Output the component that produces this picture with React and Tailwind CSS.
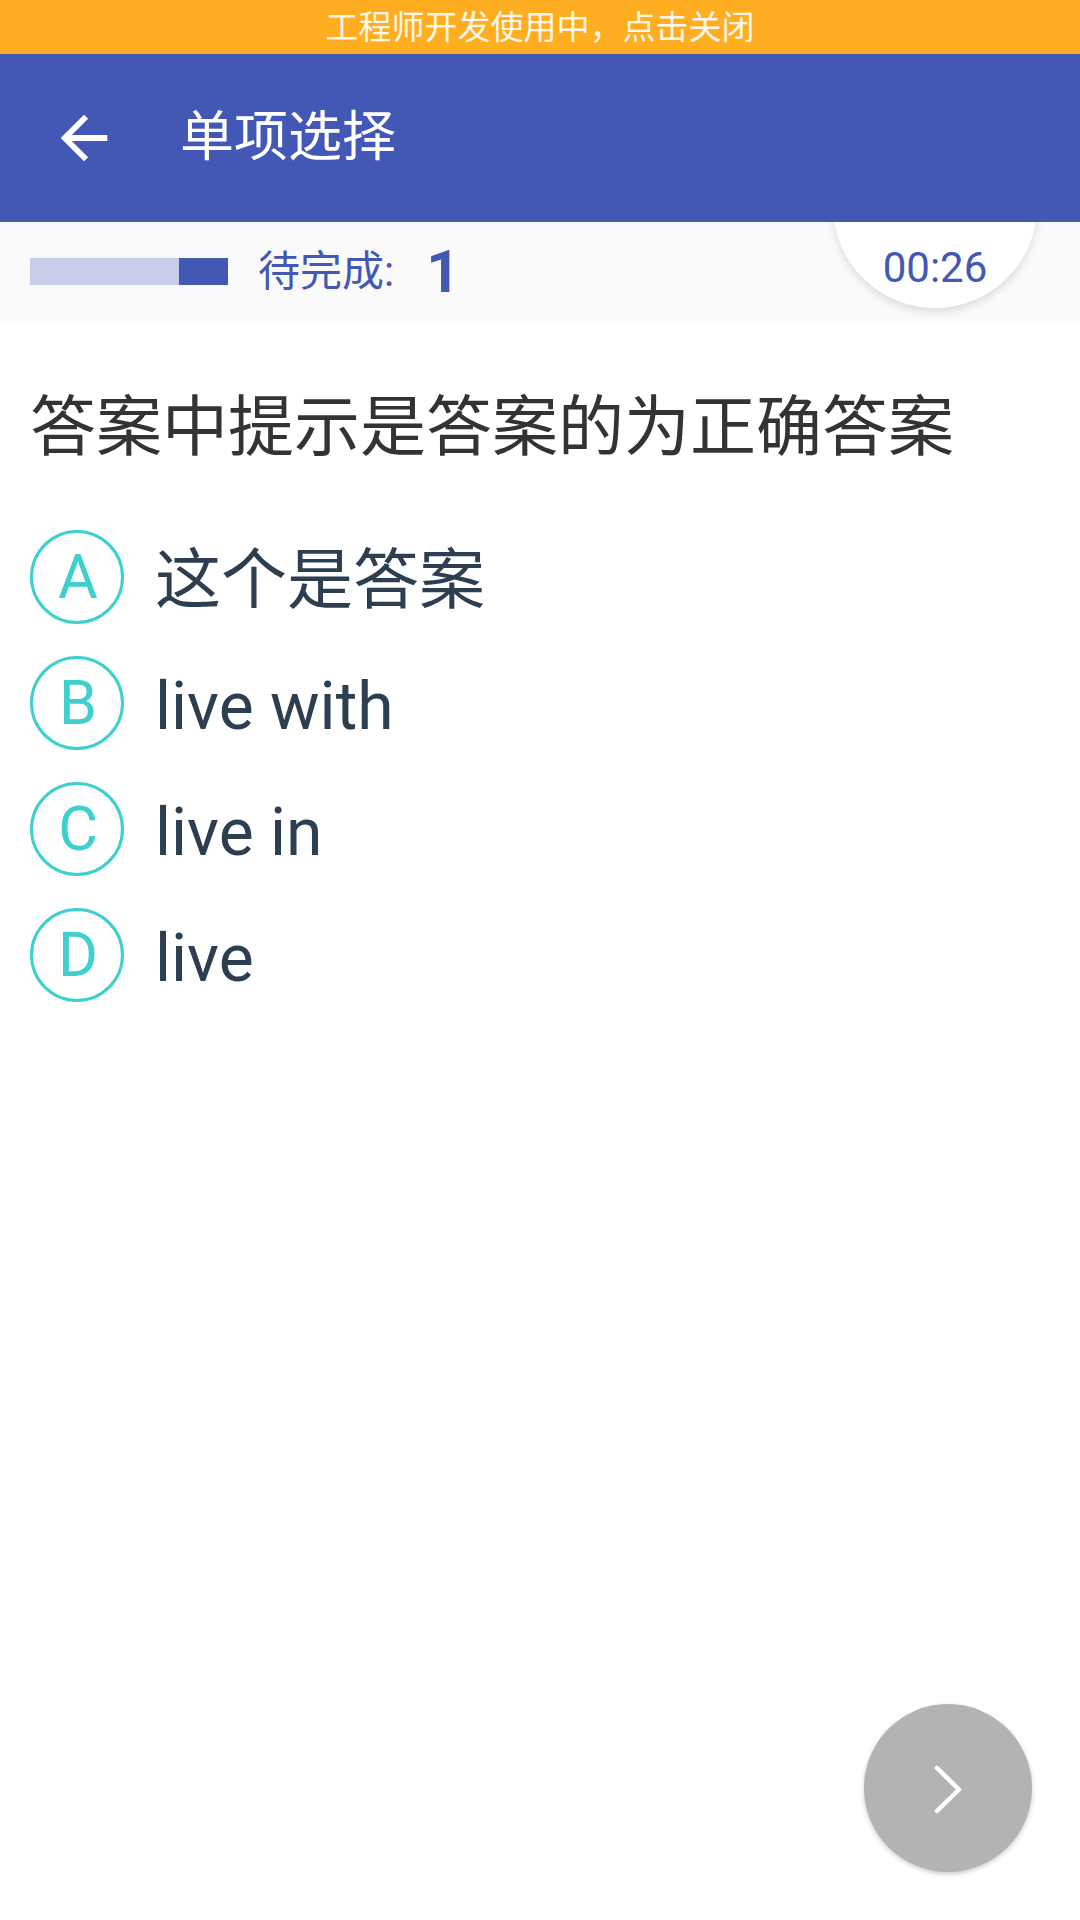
const OPTIONS = [
  { key: "A", label: "这个是答案" },
  { key: "B", label: "live with" },
  { key: "C", label: "live in" },
  { key: "D", label: "live" },
];

const BackArrow = () => (
  <svg viewBox="0 0 24 24" className="h-[70px] w-[70px]" fill="white">
    <path d="M20 11H7.83l5.59-5.59L12 4l-8 8 8 8 1.41-1.41L7.83 13H20v-2z" />
  </svg>
);

const OptionRow = ({ option }) => (
  <div className="flex items-center">
    <div className="flex h-[94px] w-[94px] shrink-0 items-center justify-center rounded-full border-[3px] border-[#3ecfcf] pl-[2px] text-[61px] leading-none text-[#3ecfcf]">
      {option.key}
    </div>
    <span className="ml-[31px] mt-[7px] text-[66px] leading-[80px] text-[#2c3e50]">
      {option.label}
    </span>
  </div>
);

const App = () => {
  return (
    <div className="relative min-h-[1920px] w-[1080px] bg-white font-['Roboto','Noto_Sans_CJK_SC',sans-serif]">
      <div className="flex h-[54px] items-center justify-center bg-[#ffad21] text-[33px] leading-none text-white/90">
        工程师开发使用中，点击关闭
      </div>

      <header className="relative z-10 flex h-[168px] items-center bg-[#4258b4] pl-[49px]">
        <BackArrow />
        <h1 className="ml-[61px] text-[54px] leading-none text-white">单项选择</h1>
      </header>

      <div className="relative flex h-[99px] items-center bg-[#fafafa] pl-[30px]">
        <div className="flex h-[27px] w-[198px]">
          <div className="w-[149px] bg-[#c8cdea]" />
          <div className="flex-1 bg-[#4258b4]" />
        </div>
        <span className="ml-[30px] text-[42px] leading-none text-[#4258b4]">待完成:</span>
        <span className="ml-[32px] text-[59px] font-bold leading-none text-[#4258b4]">1</span>

        <div className="absolute left-[833px] top-[-118px] flex h-[204px] w-[204px] flex-col items-center justify-end rounded-full bg-white pb-[19px] shadow-[0_4px_8px_rgba(0,0,0,0.12)]">
          <span className="text-[42px] leading-none text-[#4258b4]">00:26</span>
        </div>
      </div>

      <main className="px-[30px] pt-[67px]">
        <p className="text-[66px] leading-[80px] text-[#333333]">答案中提示是答案的为正确答案</p>
        <div className="mt-[62px] flex flex-col gap-[32px]">
          {OPTIONS.map((option) => (
            <OptionRow key={option.key} option={option} />
          ))}
        </div>
      </main>

      <button className="absolute bottom-[48px] right-[48px] h-[168px] w-[168px] rounded-full bg-[#b3b3b3] shadow-[0_2px_5px_rgba(0,0,0,0.2)]">
        <svg viewBox="0 0 168 168" className="h-full w-full" fill="none">
          <path
            d="M73 64 L95 85.5 L73 107"
            stroke="white"
            strokeWidth="4.5"
            strokeLinecap="round"
            strokeLinejoin="round"
          />
        </svg>
      </button>
    </div>
  );
};

export default App;
